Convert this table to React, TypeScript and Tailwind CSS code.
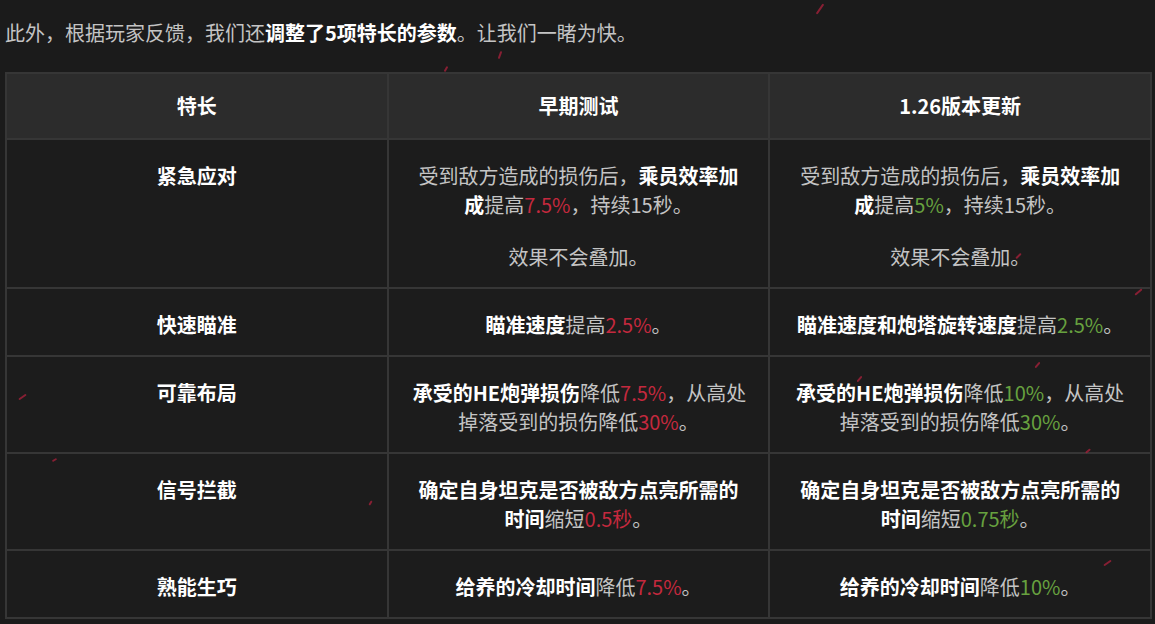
import React from "react";

type Seg = { t: string; k?: "b" | "g" | "r" | "n" };

const Line = ({ segs }: { segs: Seg[] }) => (
  <div className="whitespace-nowrap">
    {segs.map((s, i) => (
      <span
        key={i}
        className={
          s.k === "b"
            ? "font-bold text-white"
            : s.k === "r"
            ? "text-[#c4293e]"
            : s.k === "n"
            ? "text-[#67a13f]"
            : "text-[#c4c4c4]"
        }
      >
        {s.t}
      </span>
    ))}
  </div>
);

const Cell = ({ children }: { children: React.ReactNode }) => (
  <td className="border-2 border-[#363636] px-6 pt-[21px] pb-[16px] align-top text-center leading-[29px]">
    {children}
  </td>
);

const Name = ({ children }: { children: React.ReactNode }) => (
  <td className="border-2 border-[#363636] px-6 pt-[21px] pb-[16px] align-top text-center leading-[29px] font-bold text-white">
    {children}
  </td>
);

const streaks: { x: number; y: number; w: number; r: number }[] = [
  { x: 814, y: 8, w: 12, r: -55 },
  { x: 496, y: 54, w: 8, r: -70 },
  { x: 443, y: 68, w: 6, r: -60 },
  { x: 18, y: 396, w: 9, r: -35 },
  { x: 1134, y: 291, w: 9, r: -40 },
  { x: 1034, y: 364, w: 7, r: -50 },
  { x: 856, y: 378, w: 7, r: -50 },
  { x: 1015, y: 255, w: 7, r: -45 },
  { x: 1103, y: 562, w: 9, r: -35 },
  { x: 368, y: 502, w: 5, r: -60 },
  { x: 52, y: 459, w: 5, r: -30 },
  { x: 1085, y: 450, w: 6, r: -40 },
];

export default function App() {
  return (
    <div
      className="relative w-[1155px] h-[624px] overflow-hidden bg-[#1b1b1b] px-[5px] text-[20px]"
      style={{ fontFamily: '"Noto Sans CJK SC", "Noto Sans", sans-serif' }}
    >
      <p className="pt-[18px] leading-[30px] text-[#c4c4c4] whitespace-nowrap">
        此外，根据玩家反馈，我们还<span className="font-bold text-white">调整了5项特长的参数</span>。让我们一睹为快。
      </p>
      <table className="mt-[24px] w-[1147px] table-fixed border-collapse">
        <thead>
          <tr className="bg-[#2c2c2c]">
            <th className="w-1/3 border-2 border-[#363636] py-[17px] leading-[30px] font-bold text-white">特长</th>
            <th className="w-1/3 border-2 border-[#363636] py-[17px] leading-[30px] font-bold text-white">早期测试</th>
            <th className="w-1/3 border-2 border-[#363636] py-[17px] leading-[30px] font-bold text-white">1.26版本更新</th>
          </tr>
        </thead>
        <tbody className="bg-[#1c1c1c]">
          <tr>
            <Name>紧急应对</Name>
            <Cell>
              <Line segs={[{ t: "受到敌方造成的损伤后，" }, { t: "乘员效率加", k: "b" }]} />
              <Line segs={[{ t: "成", k: "b" }, { t: "提高" }, { t: "7.5%", k: "r" }, { t: "，持续15秒。" }]} />
              <div className="mt-[23px]">
                <Line segs={[{ t: "效果不会叠加。" }]} />
              </div>
            </Cell>
            <Cell>
              <Line segs={[{ t: "受到敌方造成的损伤后，" }, { t: "乘员效率加", k: "b" }]} />
              <Line segs={[{ t: "成", k: "b" }, { t: "提高" }, { t: "5%", k: "n" }, { t: "，持续15秒。" }]} />
              <div className="mt-[23px]">
                <Line segs={[{ t: "效果不会叠加。" }]} />
              </div>
            </Cell>
          </tr>
          <tr>
            <Name>快速瞄准</Name>
            <Cell>
              <Line segs={[{ t: "瞄准速度", k: "b" }, { t: "提高" }, { t: "2.5%", k: "r" }, { t: "。" }]} />
            </Cell>
            <Cell>
              <Line segs={[{ t: "瞄准速度和炮塔旋转速度", k: "b" }, { t: "提高" }, { t: "2.5%", k: "n" }, { t: "。" }]} />
            </Cell>
          </tr>
          <tr>
            <Name>可靠布局</Name>
            <Cell>
              <Line segs={[{ t: "承受的HE炮弹损伤", k: "b" }, { t: "降低" }, { t: "7.5%", k: "r" }, { t: "，从高处" }]} />
              <Line segs={[{ t: "掉落受到的损伤降低" }, { t: "30%", k: "r" }, { t: "。" }]} />
            </Cell>
            <Cell>
              <Line segs={[{ t: "承受的HE炮弹损伤", k: "b" }, { t: "降低" }, { t: "10%", k: "n" }, { t: "，从高处" }]} />
              <Line segs={[{ t: "掉落受到的损伤降低" }, { t: "30%", k: "n" }, { t: "。" }]} />
            </Cell>
          </tr>
          <tr>
            <Name>信号拦截</Name>
            <Cell>
              <Line segs={[{ t: "确定自身坦克是否被敌方点亮所需的", k: "b" }]} />
              <Line segs={[{ t: "时间", k: "b" }, { t: "缩短" }, { t: "0.5秒", k: "r" }, { t: "。" }]} />
            </Cell>
            <Cell>
              <Line segs={[{ t: "确定自身坦克是否被敌方点亮所需的", k: "b" }]} />
              <Line segs={[{ t: "时间", k: "b" }, { t: "缩短" }, { t: "0.75秒", k: "n" }, { t: "。" }]} />
            </Cell>
          </tr>
          <tr>
            <Name>熟能生巧</Name>
            <Cell>
              <Line segs={[{ t: "给养的冷却时间", k: "b" }, { t: "降低" }, { t: "7.5%", k: "r" }, { t: "。" }]} />
            </Cell>
            <Cell>
              <Line segs={[{ t: "给养的冷却时间", k: "b" }, { t: "降低" }, { t: "10%", k: "n" }, { t: "。" }]} />
            </Cell>
          </tr>
        </tbody>
      </table>
      {streaks.map((s, i) => (
        <div
          key={i}
          className="absolute h-[2px] rounded-full bg-[#a3203a] opacity-80"
          style={{ left: s.x, top: s.y, width: s.w, transform: `rotate(${s.r}deg)` }}
        />
      ))}
    </div>
  );
}
